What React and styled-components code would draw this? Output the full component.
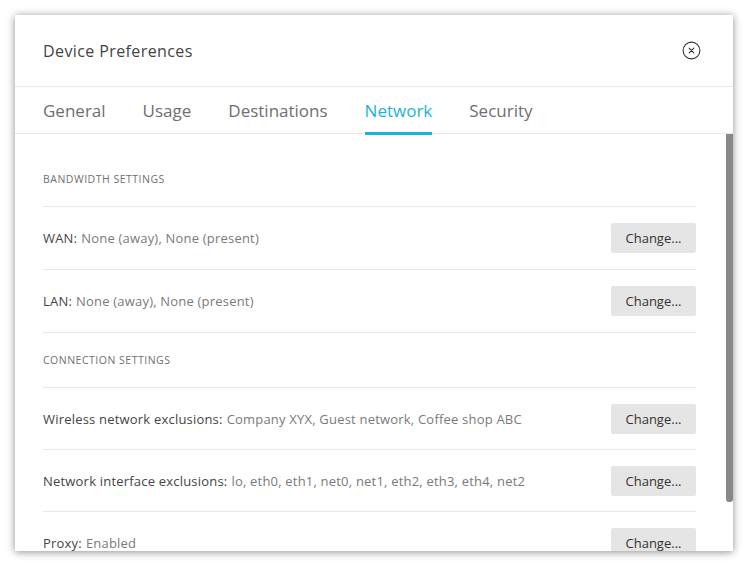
import React, { useState } from 'react';
import styled, { createGlobalStyle } from 'styled-components';

const GlobalStyle = createGlobalStyle`
  html, body {
    margin: 0;
    padding: 0;
    background: #ffffff;
  }
  body {
    font-family: 'Open Sans', Lato, 'Liberation Sans', sans-serif;
  }
`;

const Page = styled.div`
  padding: 15px;
`;

const Dialog = styled.div`
  width: 718px;
  height: 536px;
  background: #fff;
  box-shadow: 0 1px 8px rgba(0, 0, 0, 0.45);
  display: flex;
  flex-direction: column;
  overflow: hidden;
`;

const Header = styled.div`
  height: 71px;
  flex-shrink: 0;
  display: flex;
  align-items: center;
  justify-content: space-between;
  padding: 0 32px 0 28px;
  border-bottom: 1px solid #e8e8e8;
`;

const Title = styled.h1`
  margin: 0;
  font-size: 16px;
  font-weight: 400;
  color: #444;
  letter-spacing: 0.4px;
`;

const CloseButton = styled.button`
  width: 20px;
  height: 20px;
  padding: 0;
  border: none;
  background: none;
  display: flex;
  align-items: center;
  justify-content: center;
  cursor: pointer;
`;

const Tabs = styled.div`
  height: 46px;
  flex-shrink: 0;
  display: flex;
  gap: 37px;
  padding: 0 28px;
  border-bottom: 1px solid #e8e8e8;
`;

const Tab = styled.button`
  position: relative;
  padding: 0;
  border: none;
  background: none;
  font-family: inherit;
  font-size: 17px;
  color: ${(p) => (p.$active ? '#17b3e0' : '#6e6e73')};
  cursor: pointer;
  display: flex;
  align-items: center;
  height: 100%;

  &::after {
    content: '';
    position: absolute;
    left: 0;
    right: 0;
    bottom: -2px;
    height: 3px;
    background: ${(p) => (p.$active ? '#17b3e0' : 'transparent')};
  }
`;

const BodyWrap = styled.div`
  position: relative;
  flex: 1;
  min-height: 0;
`;

const Body = styled.div`
  height: 100%;
  box-sizing: border-box;
  overflow-y: auto;
  scrollbar-width: none;
  padding: 18px 37px 30px 28px;

  &::-webkit-scrollbar {
    display: none;
  }
`;

const ScrollThumb = styled.div`
  position: absolute;
  top: 0;
  right: 0;
  width: 7px;
  height: 368px;
  background: #888;
  border-radius: 0 0 3px 3px;
`;

const SectionHeading = styled.div`
  height: 54px;
  display: flex;
  align-items: center;
  font-size: 10.5px;
  letter-spacing: 0.5px;
  text-transform: uppercase;
  color: #6f6f6f;
  border-top: ${(p) => (p.$first ? 'none' : '1px solid #e8e8e8')};
`;

const Row = styled.div`
  height: ${(p) => p.$height}px;
  display: flex;
  align-items: center;
  justify-content: space-between;
  border-top: 1px solid #e8e8e8;
`;

const RowText = styled.div`
  font-size: 13px;
  letter-spacing: 0.2px;
  color: #7a7a7a;
`;

const Label = styled.span`
  color: #444;
  margin-right: 4px;
`;

const ChangeButton = styled.button`
  width: 85px;
  height: 30px;
  border: none;
  border-radius: 2px;
  background: #e5e5e5;
  color: #333;
  font-family: inherit;
  font-size: 13px;
  cursor: pointer;
`;

const CloseIcon = () => (
  <svg width="19" height="19" viewBox="0 0 19 19" fill="none" stroke="#333" strokeWidth="1.1">
    <circle cx="9.5" cy="9.5" r="8.4" />
    <path d="M7.2 7.2l4.6 4.6M11.8 7.2l-4.6 4.6" strokeLinecap="round" />
  </svg>
);

const tabs = ['General', 'Usage', 'Destinations', 'Network', 'Security'];

const sections = [
  {
    title: 'Bandwidth settings',
    rowHeight: 62,
    rows: [
      { label: 'WAN:', value: 'None (away), None (present)' },
      { label: 'LAN:', value: 'None (away), None (present)' },
    ],
  },
  {
    title: 'Connection settings',
    rowHeight: 61,
    rows: [
      { label: 'Wireless network exclusions:', value: 'Company XYX, Guest network, Coffee shop ABC' },
      { label: 'Network interface exclusions:', value: 'lo, eth0, eth1, net0, net1, eth2, eth3, eth4, net2' },
      { label: 'Proxy:', value: 'Enabled' },
    ],
  },
];

const App = () => {
  const [activeTab, setActiveTab] = useState('Network');

  return (
    <Page>
      <GlobalStyle />
      <Dialog>
        <Header>
          <Title>Device Preferences</Title>
          <CloseButton aria-label='Close'>
            <CloseIcon />
          </CloseButton>
        </Header>
        <Tabs>
          {tabs.map((t) => (
            <Tab key={t} $active={t === activeTab} onClick={() => setActiveTab(t)}>
              {t}
            </Tab>
          ))}
        </Tabs>
        <BodyWrap>
          <Body>
            {sections.map((section, i) => (
              <div key={section.title}>
                <SectionHeading $first={i === 0}>{section.title}</SectionHeading>
                {section.rows.map((row) => (
                  <Row key={row.label} $height={section.rowHeight}>
                    <RowText>
                      <Label>{row.label}</Label>
                      {row.value}
                    </RowText>
                    <ChangeButton>Change...</ChangeButton>
                  </Row>
                ))}
              </div>
            ))}
          </Body>
          <ScrollThumb />
        </BodyWrap>
      </Dialog>
    </Page>
  );
};

export default App;
